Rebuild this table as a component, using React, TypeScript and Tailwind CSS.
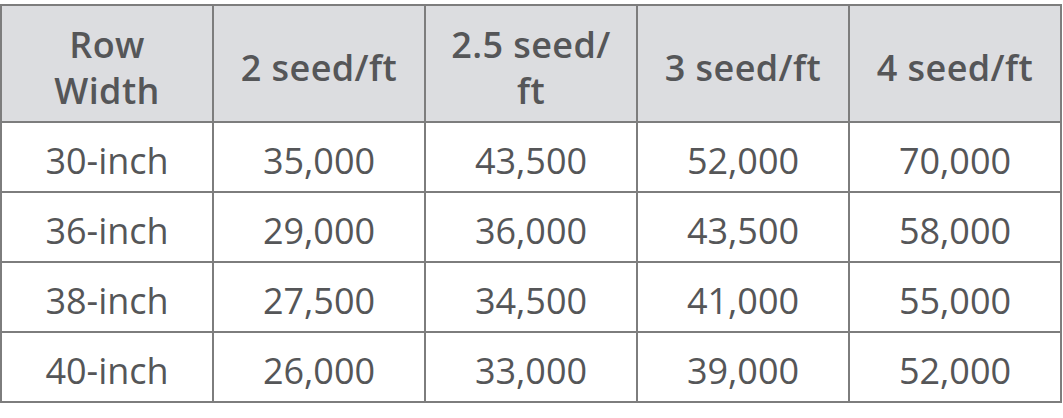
const headers = ["Row Width", "2 seed/ft", "2.5 seed/ ft", "3 seed/ft", "4 seed/ft"];

const rows = [
	["30-inch", "35,000", "43,500", "52,000", "70,000"],
	["36-inch", "29,000", "36,000", "43,500", "58,000"],
	["38-inch", "27,500", "34,500", "41,000", "55,000"],
	["40-inch", "26,000", "33,000", "39,000", "52,000"],
];

export default function App() {
	return (
		<div className="w-[1063px] h-[418px] bg-white pt-[4px] font-['Open_Sans',sans-serif] text-[#555658]">
			<table className="w-[1062px] border-collapse table-fixed">
				<thead>
					<tr className="h-[117px] bg-[#dcdde0]">
						{headers.map((h, i) => (
							<th
								key={h}
								className={
									i === 0
										? "border-2 border-[#7d7d7d] text-[36px] leading-[46px] font-semibold tracking-[0.4px] px-10 pt-[8px]"
										: i === 2
											? "border-2 border-[#7d7d7d] text-[36px] leading-[46px] font-semibold tracking-[0.4px] px-5 pt-[8px]"
											: "border-2 border-[#7d7d7d] text-[36px] leading-[46px] font-semibold tracking-[0.4px] px-2 pt-[8px]"
								}
							>
								{h}
							</th>
						))}
					</tr>
				</thead>
				<tbody>
					{rows.map((r) => (
						<tr key={r[0]} className="h-[70px]">
							{r.map((c, i) => (
								<td key={i} className="border-2 border-[#7d7d7d] text-center text-[36px] leading-none pt-[8px]">
									{c}
								</td>
							))}
						</tr>
					))}
				</tbody>
			</table>
		</div>
	);
}
